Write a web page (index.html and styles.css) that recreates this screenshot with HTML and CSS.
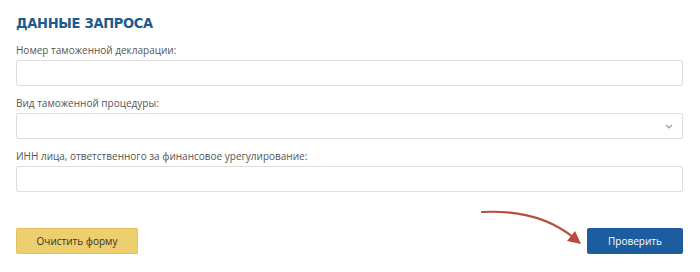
FILE: index.html
```html
<!DOCTYPE html>
<html lang="ru">
<head>
<meta charset="utf-8">
<link rel="stylesheet" href="styles.css">
</head>
<body>
<div class="page">
  <h1 class="title">ДАННЫЕ ЗАПРОСА</h1>
  <div class="field">
    <label class="label">Номер таможенной декларации:</label>
    <div class="input"></div>
  </div>
  <div class="field">
    <label class="label">Вид таможенной процедуры:</label>
    <div class="input select">
      <svg class="chev" width="8" height="5" viewBox="0 0 8 5"><path d="M1 1 L4 4 L7 1" fill="none" stroke="#9a9a9a" stroke-width="1.2"/></svg>
    </div>
  </div>
  <div class="field">
    <label class="label">ИНН лица, ответственного за финансовое урегулирование:</label>
    <div class="input"></div>
  </div>
  <div class="actions">
    <button class="btn btn-clear">Очистить форму</button>
    <button class="btn btn-check">Проверить</button>
  </div>
  <svg class="arrow" width="700" height="272" viewBox="0 0 700 272">
    <path d="M482 212 C 522 210, 552 220, 574 238" fill="none" stroke="#b94a3f" stroke-width="2.2" stroke-linecap="round"/>
    <polygon points="581,244 567,241 575,231" fill="#b94a3f"/>
  </svg>
</div>
</body>
</html>
```
FILE: styles.css
```css
html, body {
  margin: 0;
  padding: 0;
  background: #ffffff;
}
.page {
  position: relative;
  width: 700px;
  height: 272px;
  box-sizing: border-box;
  padding: 13px 17px 0 16px;
  font-family: "Open Sans", "Liberation Sans", sans-serif;
}
.title {
  margin: 0 0 10px 0;
  font-family: "DejaVu Sans Condensed", "DejaVu Sans", sans-serif;
  font-weight: bold;
  font-size: 14.5px;
  line-height: 20px;
  color: #1e5a8e;
  letter-spacing: -0.3px;
}
.field {
  display: flex;
  flex-direction: column;
  margin-bottom: 10px;
}
.label {
  font-size: 10px;
  line-height: 14px;
  color: #555555;
  margin-bottom: 3px;
}
.input {
  height: 26px;
  box-sizing: border-box;
  border: 1px solid #dedede;
  border-radius: 2px;
  background: #fff;
}
.select {
  display: flex;
  align-items: center;
  justify-content: flex-end;
  padding-right: 9px;
}
.actions {
  display: flex;
  justify-content: space-between;
  margin-top: 36px;
}
.btn {
  height: 26px;
  border: none;
  border-radius: 2px;
  font-family: "Open Sans", "Liberation Sans", sans-serif;
  font-size: 10px;
  padding: 0;
}
.btn-clear {
  width: 122px;
  background: #eecf6f;
  color: #3a3220;
  box-shadow: 0 0 0 1px #e6c35e inset;
}
.btn-check {
  width: 96px;
  background: #1b5d9e;
  color: #ffffff;
}
.arrow {
  position: absolute;
  left: 0;
  top: 0;
  pointer-events: none;
}
```
